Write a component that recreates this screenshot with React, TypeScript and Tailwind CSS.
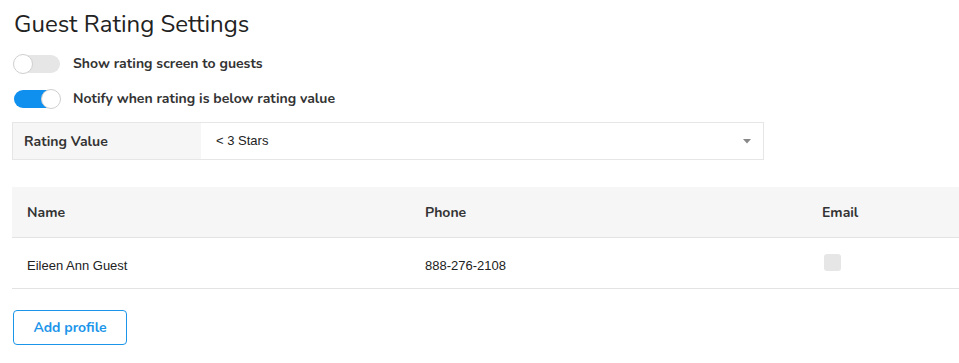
import React from "react";

const nun = { fontFamily: "Nunito, Lato, 'Open Sans', sans-serif" };

function Toggle({ on }: { on: boolean }) {
  return (
    <div
      className={`relative w-[46px] h-[18px] rounded-full ${on ? "bg-[#0f8fee]" : "bg-[#e6e6e6]"}`}
    >
      <div
        className={`absolute top-[-1px] w-[20px] h-[20px] rounded-full bg-white border border-[#cfcfcf] ${on ? "right-[-1px]" : "left-[-1px]"}`}
      />
    </div>
  );
}

export default function App() {
  return (
    <div className="bg-white w-[959px] h-[363px] overflow-hidden text-[#333]" style={nun}>
      <div className="pl-[14px] pt-[10px]">
        <h1 className="text-[24px] leading-[28px] text-[#222] font-normal">
          Guest Rating Settings
        </h1>
      </div>
      <div className="pl-[14px] mt-[15px] flex flex-col gap-[14px]">
        <div className="flex items-center gap-[13px]">
          <Toggle on={false} />
          <span className="text-[14px] font-bold text-[#333]">Show rating screen to guests</span>
        </div>
        <div className="flex items-center gap-[13px]">
          <Toggle on={true} />
          <span className="text-[14px] font-bold text-[#333]">Notify when rating is below rating value</span>
        </div>
      </div>
      <div className="ml-[12px] mt-[13px] w-[752px] h-[38px] border border-[#e6e6e6] flex">
        <div className="w-[188px] bg-[#f6f6f6] flex items-center pl-[11px] text-[14px] font-bold text-[#333]">
          Rating Value
        </div>
        <div
          className="flex-1 flex items-center justify-between pl-[15px] pr-[12px] text-[13px] text-[#222]"
          style={{ fontFamily: "'Liberation Sans', Arial, sans-serif" }}
        >
          <span>&lt; 3 Stars</span>
          <svg width="8" height="5" viewBox="0 0 8 5">
            <path d="M0 0 L8 0 L4 4.5 Z" fill="#888" />
          </svg>
        </div>
      </div>
      <div className="ml-[12px] mt-[27px]">
        <div className="grid grid-cols-[398px_397px_1fr] h-[51px] bg-[#f6f6f6] border-b border-[#e3e3e3] items-center text-[14px] font-bold text-[#333]">
          <div className="pl-[15px]">Name</div>
          <div className="pl-[15px]">Phone</div>
          <div className="pl-[15px]">Email</div>
        </div>
        <div
          className="grid grid-cols-[398px_397px_1fr] h-[51px] border-b border-[#e3e3e3] items-center text-[13px] text-[#222]"
          style={{ fontFamily: "'Liberation Sans', Arial, sans-serif" }}
        >
          <div className="pl-[15px] pt-[6px]">Eileen Ann Guest</div>
          <div className="pl-[15px] pt-[6px]">888-276-2108</div>
          <div className="pl-[17px]">
            <div className="w-[17px] h-[17px] rounded-[3px] bg-[#e6e6e6] mb-[1px]" />
          </div>
        </div>
      </div>
      <div className="ml-[13px] mt-[21px]">
        <button className="w-[114px] h-[35px] border border-[#1b95ea] rounded-[4px] text-[#1b95ea] text-[14px] font-bold bg-white">
          Add profile
        </button>
      </div>
    </div>
  );
}
